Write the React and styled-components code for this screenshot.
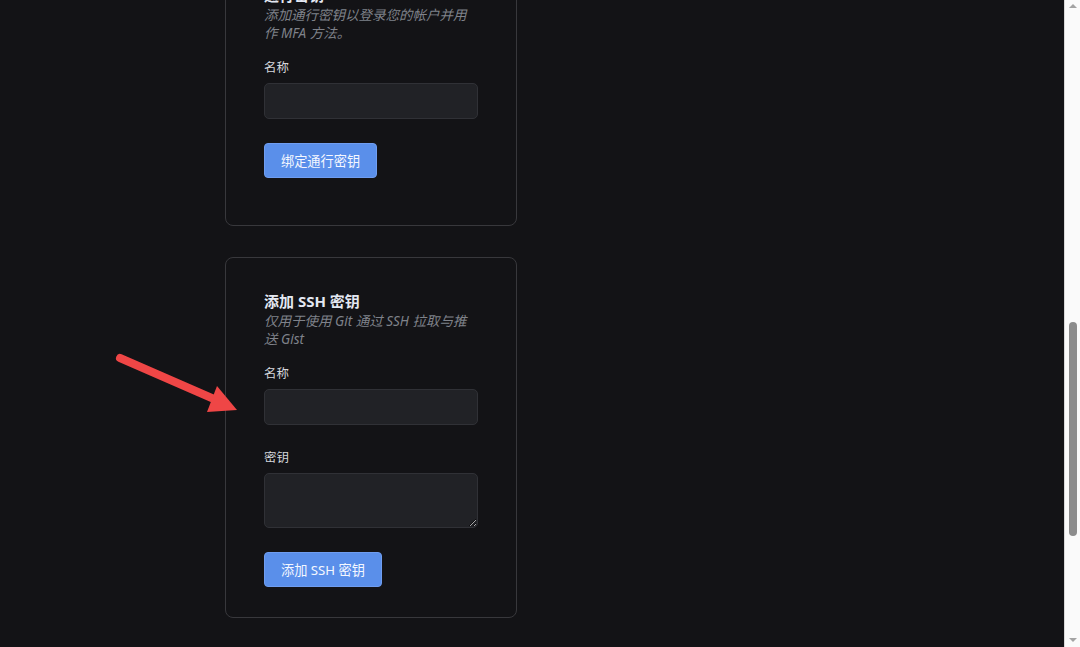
import React from "react";
import styled, { createGlobalStyle } from "styled-components";

const Global = createGlobalStyle`
  html, body { margin: 0; padding: 0; background: #131316; }
  body { font-family: "Noto Sans", "Noto Sans CJK SC", sans-serif; }
  * { box-sizing: border-box; }
`;

const Screen = styled.div`
  display: flex;
  width: 1080px;
  height: 647px;
  overflow: hidden;
`;

const Viewport = styled.div`
  position: relative;
  flex: 1;
  height: 100%;
  overflow: hidden;
  background: #131316;
`;

const Column = styled.div`
  display: flex;
  flex-direction: column;
  gap: 31px;
  margin-top: -49px;
  padding-left: 225px;
`;

const Card = styled.section`
  width: 292px;
  border: 1px solid #38383c;
  border-radius: 8px;
  padding: 32px 38px ${(p) => p.$bottom}px 38px;
  display: flex;
  flex-direction: column;
`;

const Title = styled.h3`
  margin: 0;
  font-size: 15px;
  line-height: 22px;
  font-weight: 700;
  color: #e4e8f2;
  font-family: "Noto Sans", "Noto Sans CJK SC", sans-serif;
`;

const Desc = styled.p`
  margin: 0;
  font-size: 13.5px;
  line-height: 18px;
  font-style: italic;
  color: #7f828a;
`;

const Label = styled.label`
  display: block;
  margin-top: ${(p) => p.$top}px;
  margin-bottom: 6px;
  font-size: 12.5px;
  line-height: 18px;
  color: #d4d6db;
`;

const Input = styled.input`
  display: block;
  width: 100%;
  height: 36px;
  background: #212226;
  border: 1px solid #303136;
  border-radius: 5px;
  color: #e5e7eb;
  outline: none;
`;

const TextArea = styled.textarea`
  display: block;
  width: 100%;
  height: 55px;
  background: #212226;
  border: 1px solid #303136;
  border-radius: 5px;
  color: #e5e7eb;
  outline: none;
`;

const Button = styled.button`
  align-self: flex-start;
  margin-top: 24px;
  height: 35px;
  padding: 0 16px;
  background: #5a8fea;
  border: 1px solid #6f9df0;
  border-radius: 4px;
  color: #f4f7ff;
  font-size: 13.2px;
  font-family: "Noto Sans", "Noto Sans CJK SC", sans-serif;
  cursor: pointer;
`;

const Arrow = styled.svg`
  position: absolute;
  left: 0;
  top: 0;
  pointer-events: none;
`;

const ScrollBar = styled.div`
  width: 16px;
  height: 100%;
  background: #fafafa;
  border-left: 1px solid #d9d9d9;
  display: flex;
  flex-direction: column;
  align-items: center;
  justify-content: space-between;
  padding: 4px 0 5px;
`;

const ScrollArrow = styled.div`
  width: 0;
  height: 0;
  border-left: 4px solid transparent;
  border-right: 4px solid transparent;
  ${(p) =>
    p.$down
      ? "border-top: 4px solid #a3a3a3;"
      : "border-bottom: 4px solid #a3a3a3;"}
`;

const Track = styled.div`
  flex: 1;
  width: 100%;
  display: flex;
  justify-content: center;
  padding-top: 314px;
`;

const Thumb = styled.div`
  width: 8px;
  height: 214px;
  border-radius: 4px;
  background: #8c8c8c;
`;

export default function App() {
  return (
    <>
      <Global />
      <Screen>
        <Viewport>
          <Column>
            <Card $bottom={47}>
              <Title>通行密钥</Title>
              <Desc>添加通行密钥以登录您的帐户并用作 MFA 方法。</Desc>
              <Label $top={17}>名称</Label>
              <Input />
              <Button>绑定通行密钥</Button>
            </Card>
            <Card $bottom={30}>
              <Title>添加 SSH 密钥</Title>
              <Desc>仅用于使用 Git 通过 SSH 拉取与推送 Gist</Desc>
              <Label $top={17}>名称</Label>
              <Input />
              <Label $top={24}>密钥</Label>
              <TextArea />
              <Button>添加 SSH 密钥</Button>
            </Card>
          </Column>
          <Arrow width="260" height="430" viewBox="0 0 260 430">
            <line
              x1="120"
              y1="358"
              x2="214"
              y2="399"
              stroke="#ef4646"
              strokeWidth="8"
              strokeLinecap="round"
            />
            <polygon points="237,410 217,386 207,412" fill="#ef4646" />
          </Arrow>
        </Viewport>
        <ScrollBar>
          <ScrollArrow />
          <Track>
            <Thumb />
          </Track>
          <ScrollArrow $down />
        </ScrollBar>
      </Screen>
    </>
  );
}
